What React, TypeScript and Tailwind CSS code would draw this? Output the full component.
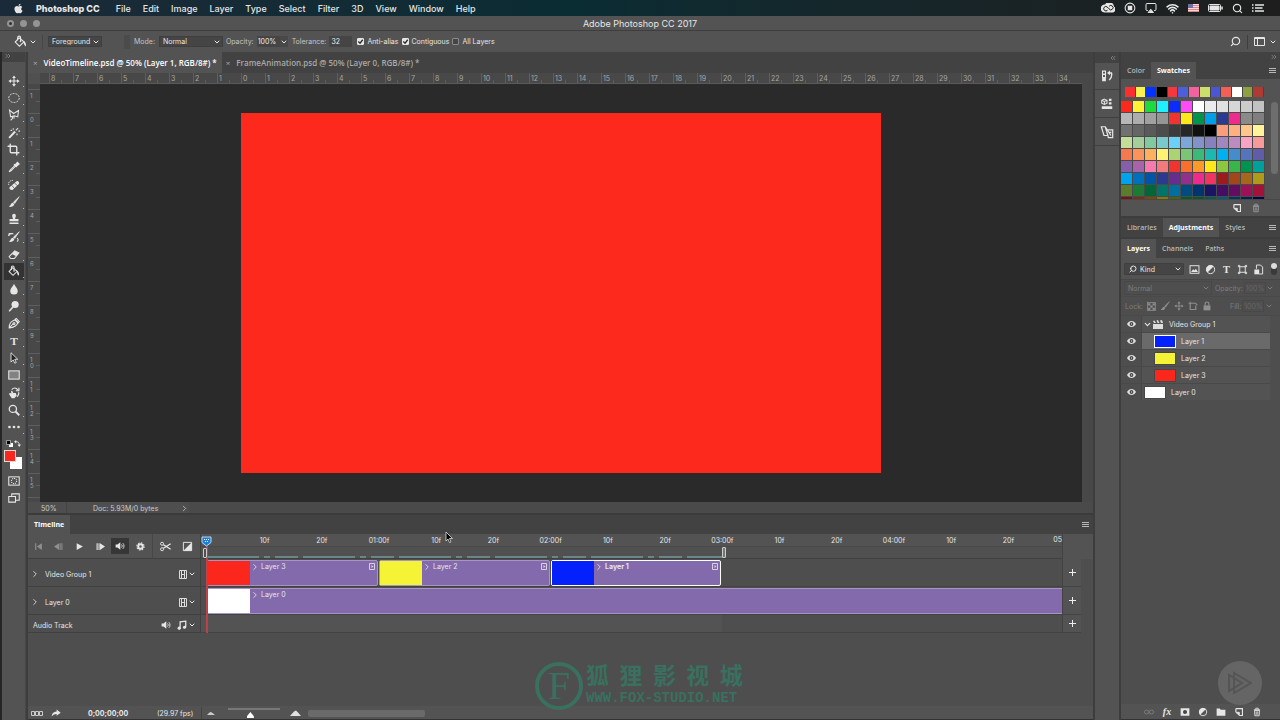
import type { ReactNode } from "react";
import { FaApple } from "react-icons/fa";
import {
  AirplayIcon,
  ChevronDown,
  ChevronRight,
  ChevronsLeft,
  ChevronsRight,
  Crop,
  Search,
  Wifi,
} from "lucide-react";

const menus = ["File", "Edit", "Image", "Layer", "Type", "Select", "Filter", "3D", "View", "Window", "Help"];

const topTicks = [8, 7, 6, 5, 4, 3, 2, 1, ...Array.from({ length: 35 }, (_, i) => i)];
const sideTicks = [1, ...Array.from({ length: 16 }, (_, i) => i)];

const timeMarks = [
  "10f", "20f", "01:00f", "10f", "20f", "02:00f", "10f", "20f",
  "03:00f", "10f", "20f", "04:00f", "10f", "20f",
];

const recentSwatches = [
  "#f9302f", "#f8f24e", "#0433ff", "#000000", "#f5383a", "#4a5fd8", "#f063a0",
  "#cddf6b", "#4c55d6", "#f25f54", "#ffffff", "#8f9f3f", "#b03a33",
];

const swatchRows = [
  "fd2a1c fdf334 1edb3b 1ef0ff 0a2cff fb4df5 ffffff ebebeb e1e1e1 d6d6d6 cccccc c2c2c2",
  "b7b7b7 adadad a0a0a0 959595 f0342f ffe81a 00954a 00a0e9 2b3990 ee2a8c 8a8a8a 7f7f7f",
  "717171 666666 5a5a5a 4d4d4d 3c3c3c 272727 111111 000000 f99d7c fcb182 fdc78c fff49a",
  "c4dd9a a3cf9b 82c9a0 7cc9cb 6dcff6 7da7d9 8393ca 8781bd a187be bc8cbf f9a3c4 f69a9a",
  "f4794e f9955a fbb160 fff173 acd373 7bc576 3cb878 1cb8b1 00b0f0 448ccb 5674b9 605ca8",
  "8560a8 a864a8 f77aae f27a7d f0342f f7702c fb9a2b ffe81a 8dc63f 39b54a 00924f 00a09d",
  "00a3ee 0070bc 0055a6 2b3990 662d91 92318d ee2a8c f03561 9e1b1b a0481a a5671c ae9a1b",
  "5b7c2f 1b7a36 006838 00746b 006fa0 004b80 003471 1b1464 440e62 630d5f 9e1058 a4123a",
  "7a1113 7b2e10 7d4900 827b00 406618 005e20 005826 005952 005b7f 003663 002157 0d004c",
];

const layers = [
  { name: "Layer 1", color: "bg-[#0420fb]", nested: true, selected: true },
  { name: "Layer 2", color: "bg-[#f4f336]", nested: true, selected: false },
  { name: "Layer 3", color: "bg-[#fb261c]", nested: true, selected: false },
  { name: "Layer 0", color: "bg-white", nested: false, selected: false },
];

function Icon({ size = 12, children }: { size?: number; children: ReactNode }) {
  return (
    <svg
      width={size}
      height={size}
      viewBox="0 0 16 16"
      fill="none"
      stroke="currentColor"
      strokeWidth="1.4"
      className="shrink-0"
      aria-hidden="true"
    >
      {children}
    </svg>
  );
}

const solid = { fill: "currentColor", stroke: "none" };

const bucket = (
  <>
    <path d="M6.2 3.5 1.5 8.7l5.2 5 5.6-5.3z" />
    <path d="M4.5 6.5V3.4c0-2.6 3.6-2.6 3.6 0v4.3" />
    <path d="M12 7.5c2 1 3.2 3.4 2.6 6.6-1.8-.6-2.6-2.6-2.6-6.6z" {...solid} />
    <circle cx="8" cy="8" r="1" {...solid} />
  </>
);

const brush = (
  <>
    <path d="M15 1 7.2 8.2l1.7 1.7z" fill="currentColor" strokeWidth="1" />
    <path d="M6.5 9c-3 .2-2.4 3.6-5.5 5 3.4 1.3 7.2.2 7.3-3.2z" {...solid} />
  </>
);

const speaker = (
  <>
    <path d="M1 5.5h3L8.5 2v12L4 10.5H1z" {...solid} />
    <path d="M10.5 5.5c1.3 1.5 1.3 3.5 0 5M12.6 3.5c2.4 2.7 2.4 6.3 0 9" />
  </>
);

const halfCircle = (
  <>
    <circle cx="8" cy="8" r="6" />
    <path d="M12.3 3.7A6 6 0 0 0 3.7 12.3z" {...solid} />
  </>
);

const page = (
  <>
    <path d="M3 2.5h10.5v11h-5M3 2.5v6" strokeWidth="1.8" />
    <path d="M3 8.5h5.5v5z" fill="currentColor" />
  </>
);

const trash = (
  <>
    <path d="M3 4.5h10M6 4.5V2h4v2.5" />
    <path d="M4 5.5h8l-.5 8.5h-7z" />
    <path d="M6.7 7v5.5M9.3 7v5.5" />
  </>
);

const fourWay = (
  <>
    <path d="M8 3v10M3 8h10" />
    <path d="M8 .5 10.5 4h-5zM8 15.5 10.5 12h-5zM.5 8 4 5.5v5zM15.5 8 12 5.5v5z" {...solid} />
  </>
);

const letterT = (
  <text x="8" y="13" textAnchor="middle" fontSize="15" fontFamily="Liberation Serif, serif" fontWeight="700" {...solid}>
    T
  </text>
);

const tools: { name: string; art: ReactNode }[] = [
  { name: "Move", art: fourWay },
  { name: "Elliptical marquee", art: <ellipse cx="8" cy="8" rx="7" ry="6" strokeDasharray="2.6 1.4" strokeWidth="1.2" /> },
  {
    name: "Polygonal lasso",
    art: <path d="M2 1.5 7.5 6 14 2l-1 8.5L8.5 9l-5 1.5zM5 10c2 1 1 3-1.5 5M8 9.5V13" />,
  },
  {
    name: "Magic wand",
    art: (
      <>
        <path d="M1.5 14.5 9.500 6" strokeWidth="2.6" />
        <path d="M7 1.5v2M12 8.5V11M14 5.5h2M10.5 4.5l3-3M3.5 4.5h2" />
      </>
    ),
  },
  { name: "Crop", art: null },
  {
    name: "Eyedropper",
    art: (
      <>
        <path d="m10 5-7 7-1.5 2.500L4 13l7-7" />
        <path d="M8 4.5 11.5 8m-2-2.5 3-3.5 2 2L11 7z" fill="currentColor" strokeWidth="2" />
      </>
    ),
  },
  {
    name: "Healing brush",
    art: (
      <>
        <path d="m2 11 9.500-8c2-1 4 1.500 3 3.500L6 14.500c-2.500 1-5-1.500-4-3.500z" {...solid} />
        <path d="M5 8.500 9 13m0-7.500 4 4" stroke="#535353" strokeWidth="1" />
        <path d="M1 8C0 4 3 1.500 7 2" strokeDasharray="1.5 1.2" strokeWidth="1.2" />
      </>
    ),
  },
  { name: "Brush", art: brush },
  {
    name: "Clone stamp",
    art: <path d="M5.500 3.500a2.500 2.500 0 0 1 5 0c0 1.700-1 2-1 4.500H14v3H2V8h4.500c0-2.500-1-2.800-1-4.500zM2 12.500h12v2H2z" {...solid} />,
  },
  {
    name: "History brush",
    art: (
      <>
        {brush}
        <path d="M1 3.500h6M1 6.500c0-1.500 1-3 3-3" strokeWidth="1.8" />
        <path d="M12 9.500c2 1 2 3 0 4.500" />
      </>
    ),
  },
  {
    name: "Eraser",
    art: (
      <>
        <path d="M1.500 11.500 9 4l5.500 2.500-6 7.500h-5z" />
        <path d="M5 8 9 4l5.500 2.500L11 11z" {...solid} />
      </>
    ),
  },
  { name: "Paint bucket", art: bucket },
  { name: "Blur", art: <path d="M8 1c1 3 5 6 5 9.500a5 4.800 0 0 1-10 0C3 7 7 4 8 1z" {...solid} /> },
  {
    name: "Dodge",
    art: (
      <>
        <circle cx="9.5" cy="6" r="4.8" {...solid} />
        <path d="m6.500 9.500-5 5.500" strokeWidth="2" />
      </>
    ),
  },
  {
    name: "Pen",
    art: (
      <>
        <path d="M1.500 14.500c0-5 2-9 7.500-10.500L13 8c-1.500 4.500-6 6-11.500 6.500zM9.500 3l4.500 4.500 1-1.500-4-4zM1.500 14.500 7 9" />
        <circle cx="8" cy="8.5" r="1.3" />
      </>
    ),
  },
  { name: "Type", art: letterT },
  { name: "Path selection", art: <path d="M4 1v12.500l3-3 2 4.500 2-1-2-4.300h4z" fill="#222" strokeWidth="1.2" /> },
  { name: "Rectangle", art: <rect x="1" y="2.5" width="14" height="11" fill="#828282" /> },
  {
    name: "Rotate view",
    art: (
      <>
        <path d="M1.500 9.500c0-2 2-2 3-1L4 5l2 .5 1 2.500h3.500l1 3.500-3 3.500H5z" {...solid} />
        <path d="M5 3.500c2.500-3 6-3 8 .5M14.500 1v4h-4M14 7c1 2.500 0 4-2 6" strokeWidth="1.6" />
      </>
    ),
  },
  {
    name: "Zoom",
    art: (
      <>
        <circle cx="6.5" cy="6.5" r="4.8" strokeWidth="1.7" />
        <path d="m10 10 5 5" strokeWidth="2.4" />
      </>
    ),
  },
  {
    name: "Edit toolbar",
    art: (
      <>
        <circle cx="2" cy="8" r="1.8" {...solid} />
        <circle cx="8" cy="8" r="1.8" {...solid} />
        <circle cx="14" cy="8" r="1.8" {...solid} />
      </>
    ),
  },
];

function Select({ label, value, className }: { label: string; value: string; className: string }) {
  return (
    <span className={`grid items-center ${className}`}>
      <select aria-label={label} className="col-start-1 row-start-1 w-full appearance-none bg-transparent px-[3px] outline-none">
        <option>{value}</option>
      </select>
      <ChevronDown size={8} strokeWidth={3} className="pointer-events-none col-start-1 row-start-1 mr-px justify-self-end" />
    </span>
  );
}

function Check({ label, checked }: { label: string; checked?: boolean }) {
  return (
    <label className="flex items-center gap-[3px]">
      <span className="grid">
        <input
          type="checkbox"
          defaultChecked={checked}
          className="col-start-1 row-start-1 size-[7px] appearance-none rounded-[1px] border border-[#8a8a8a] bg-[#454545] checked:border-[#e6e6e6] checked:bg-[#e6e6e6]"
        />
        {checked && (
          <svg viewBox="0 0 8 8" className="pointer-events-none col-start-1 row-start-1 size-[7px]" fill="none" stroke="#2b2b2b" strokeWidth="1.5">
            <path d="m1.500 4 2 2 3-4" />
          </svg>
        )}
      </span>
      {label}
    </label>
  );
}

function PanelTabs({ tabs, active, className }: { tabs: string[]; active: string; className: string }) {
  return (
    <div className={`flex bg-[#424242] font-['Open_Sans',sans-serif] ${className}`}>
      {tabs.map((tab) => (
        <button
          key={tab}
          className={tab === active ? "bg-[#535353] px-[6px] font-bold text-white" : "px-[6px] font-semibold text-[#b8b8b8]"}
        >
          {tab}
        </button>
      ))}
      <button aria-label="Panel menu" className="mr-1 ml-auto">
        <svg width="7" height="6" viewBox="0 0 7 6" stroke="#b8b8b8" aria-hidden="true">
          <path d="M0 .5h7M0 2.500h7M0 4.500h7" />
        </svg>
      </button>
    </div>
  );
}

function MenuBar() {
  return (
    <header className="flex h-4 items-center bg-linear-to-r from-[#1b2a38] via-[#0a2c33] via-45% to-[#1e1e1e] pr-4 pl-[13px] text-[9px] font-medium">
      <FaApple size={11} />
      <nav className="ml-3 flex gap-3">
        <button className="mr-1 font-extrabold">Photoshop CC</button>
        {menus.map((menu) => (
          <button key={menu}>{menu}</button>
        ))}
      </nav>
      <div className="ml-auto flex items-center gap-[9px]">
        <svg width="14" height="10" viewBox="0 0 14 10" aria-hidden="true">
          <path d="M4.500 9.500A4 4 0 1 1 4 1.600 4.800 4.800 0 0 1 13 3.500a3.300 3.300 0 0 1-2.500 6z" fill="#e6e6e6" />
          <path d="M6.500 7.200A2.200 2.200 0 1 1 6.300 4L8 5.800a2.200 2.200 0 1 0 .2-2.600" fill="none" stroke="#1e1e1e" />
        </svg>
        <Icon>
          <circle cx="8" cy="8" r="6.5" />
          <rect x="5" y="5" width="6" height="6" {...solid} />
        </Icon>
        <AirplayIcon size={12} fill="currentColor" className="[&>path:first-child]:fill-none" />
        <Wifi size={13} strokeWidth={3} />
        <svg width="11" height="8" viewBox="0 0 11 8" aria-hidden="true">
          <path d="M0 0h11v8H0z" fill="#f0dcdc" />
          <path d="M0 1.500h11M0 3.500h11M0 5.500h11M0 7.500h11" stroke="#e08484" />
          <path d="M0 0h5v4H0z" fill="#6d6fa5" />
        </svg>
        <svg width="15" height="8" viewBox="0 0 15 8" fill="none" stroke="currentColor" aria-hidden="true">
          <rect x=".5" y=".5" width="12" height="7" rx="1" />
          <path d="M2 2h9v4H2z" fill="currentColor" />
          <path d="M14 2.500v3" strokeWidth="1.5" />
        </svg>
        <Search size={11} strokeWidth={2.5} />
        <svg width="12" height="8" viewBox="0 0 12 8" stroke="currentColor" strokeWidth="1.4" aria-hidden="true">
          <path d="M0 1h1.500M3 1h9M0 4h1.500M3 4h7.500M0 7h1.500M3 7h9" />
        </svg>
      </div>
    </header>
  );
}

function TitleBar() {
  return (
    <div className="grid h-[15px] grid-cols-[60px_1fr_60px] items-center border-b border-[#3e3e3e] bg-[#535353] text-[9px]">
      <div className="flex gap-[6px] pl-[7px]">
        <button aria-label="Close" className="grid size-[7px] place-items-center rounded-full bg-[#949494]">
          <span className="size-[3px] rounded-full bg-[#333]" />
        </button>
        <button aria-label="Minimize" className="size-[7px] rounded-full bg-[#949494]" />
        <button aria-label="Full screen" className="size-[7px] rounded-full bg-[#949494]" />
      </div>
      <h1 className="text-center">Adobe Photoshop CC 2017</h1>
    </div>
  );
}

function OptionsBar() {
  return (
    <div className="flex h-[21px] items-center bg-[#535353] pr-[3px] pl-[14px]">
      <button aria-label="Tool preset" className="flex items-center gap-[2px]">
        <Icon size={13}>{bucket}</Icon>
        <ChevronDown size={8} strokeWidth={3} />
      </button>
      <span className="ml-[5px] h-[14px] w-px bg-[#474747]" />
      <Select label="Fill source" value="Foreground" className="ml-[5px] h-[11px] w-[54px] border border-[#3f3f3f] bg-[#454545]" />
      <span className="ml-[22px] h-[14px] w-[6px] bg-[#4b4b4b]" />
      <span className="mr-1 ml-1 text-[#c4c4c4]">Mode:</span>
      <Select label="Mode" value="Normal" className="h-[11px] w-16 border border-[#3f3f3f] bg-[#454545]" />
      <label className="ml-[3px] flex items-center gap-[3px] text-[#c4c4c4]">
        Opacity:
        <input defaultValue="100%" className="h-[11px] w-[23px] bg-[#454545] px-px text-[#eee]" />
      </label>
      <button aria-label="Opacity slider" className="grid h-[11px] w-2 place-items-center bg-[#484848]">
        <ChevronDown size={8} strokeWidth={3} />
      </button>
      <label className="ml-1 flex items-center gap-[3px] text-[#c4c4c4]">
        Tolerance:
        <input defaultValue="32" className="h-[11px] w-[23px] bg-[#454545] px-[2px] text-[#eee]" />
      </label>
      <div className="ml-[5px] flex gap-[3px]">
        <Check label="Anti-alias" checked />
        <Check label="Contiguous" checked />
        <Check label="All Layers" />
      </div>
      <button aria-label="Search" className="ml-auto">
        <Search size={11} strokeWidth={2.5} className="-scale-x-100" />
      </button>
      <span className="mx-[6px] h-[14px] w-px bg-[#3f3f3f]" />
      <button aria-label="Workspace" className="flex items-center gap-1">
        <svg width="11" height="9" viewBox="0 0 11 9" fill="none" stroke="currentColor" aria-hidden="true">
          <path d="M.5.500h10v8H.5zM0 1.500h11M3.500 1v7" />
        </svg>
        <ChevronDown size={8} strokeWidth={3} />
      </button>
    </div>
  );
}

function Toolbar() {
  return (
    <aside className="w-6 shrink-0 border-r border-[#484848] bg-[#535353]">
      <div className="h-[10px] bg-[#424242] pl-[2px] text-[#999]">
        <ChevronsRight size={8} />
      </div>
      <div className="mt-[10px] grid h-[364px] auto-rows-fr justify-items-center">
        {tools.map((tool) => (
          <button
            key={tool.name}
            aria-label={tool.name}
            className={
              tool.name === "Paint bucket"
                ? "relative grid w-5 place-items-center bg-[#333]"
                : "relative grid w-5 place-items-center"
            }
          >
            {tool.name === "Crop" ? <Crop size={13} strokeWidth={2.5} /> : <Icon>{tool.art}</Icon>}
            <span className="absolute right-0 bottom-[2px] size-px bg-[#bbb]" />
          </button>
        ))}
      </div>
      <div className="flex justify-between px-1 pt-1">
        <svg width="7" height="7" viewBox="0 0 7 7" aria-hidden="true">
          <path d="M3 3h4v4H3z" fill="#fff" />
          <path d="M.5.500h4v4h-4z" fill="#000" stroke="#ccc" strokeWidth=".7" />
        </svg>
        <Icon size={7}>
          <path d="M4 4c5-1 8 2 8 7" strokeWidth="2" />
          <path d="M5 0v8L0 4zM8 10h8l-4 6z" {...solid} />
        </Icon>
      </div>
      <div className="relative mx-[2px] mt-[3px] h-[19px]">
        <span className="absolute right-px bottom-0 size-3 bg-white" />
        <span className="absolute top-0 left-0 size-3 border border-[#ddd] bg-[#fb261c]" />
      </div>
      <div className="mt-[6px] grid justify-items-center gap-[5px]">
        <button aria-label="Quick mask">
          <Icon>
            <rect x="1" y="2.5" width="14" height="11" />
            <circle cx="8" cy="8" r="3.5" strokeDasharray="1.5 1.2" />
          </Icon>
        </button>
        <button aria-label="Screen mode">
          <Icon>
            <path d="M5 6V2.500h10v8.500h-5M1 6h9v7.500H1z" />
          </Icon>
        </button>
      </div>
    </aside>
  );
}

function DocumentArea() {
  return (
    <section className="flex flex-1 flex-col">
      <div className="flex h-[21px] bg-[#424242] font-['Open_Sans',sans-serif] text-[8px] font-semibold">
        <div className="flex items-center gap-[6px] bg-[#535353] px-[5px] text-white">
          <button aria-label="Close VideoTimeline.psd" className="font-normal text-[#aaa]">×</button>
          VideoTimeline.psd @ 50% (Layer 1, RGB/8#) *
        </div>
        <div className="flex items-center gap-[6px] pl-1 text-[#a9a9a9]">
          <button aria-label="Close FrameAnimation.psd" className="font-normal">×</button>
          FrameAnimation.psd @ 50% (Layer 0, RGB/8#) *
        </div>
      </div>
      <div className="flex flex-1">
        <div className="flex w-3 shrink-0 flex-col bg-[#484848]">
          <div className="h-[11px] shrink-0 bg-[#505050]" />
          <div className="flex-1 overflow-hidden pt-[5px] text-[6px] leading-[6px] text-[#a5a5a5] contain-size">
            {sideTicks.map((tick, i) => (
              <div key={i} className="flex h-6 justify-between border-t border-[#5e5e5e]">
                <span className="w-[6px] pt-[3px] pl-[2px] break-all">{tick}</span>
                <span className="mt-[11px] h-px w-1 bg-[#5e5e5e]" />
              </div>
            ))}
            <div className="border-t border-[#5e5e5e]" />
          </div>
        </div>
        <div className="flex min-w-0 flex-1 flex-col">
          <div className="flex h-[11px] overflow-hidden border-b border-[#5a5a5a] bg-[#484848] pl-[9px] text-[7px] leading-[8px] text-[#a5a5a5]">
            {topTicks.map((tick, i) => (
              <div key={i} className="flex w-6 shrink-0 items-end border-l border-[#5e5e5e]">
                <span className="w-[11px] pl-px">{tick}</span>
                <span className="h-[3px] w-px bg-[#5e5e5e]" />
              </div>
            ))}
          </div>
          <div className="flex flex-1 items-center justify-center bg-[#2a2a2a]">
            <div className="aspect-video w-[640px] bg-[#fd291c]" />
          </div>
        </div>
        <div className="w-[11px] shrink-0 bg-[#484848]" />
      </div>
      <div className="flex h-[11px] items-center bg-[#4a4a4a] text-[7px] text-[#ccc]">
        <span className="flex h-full w-[39px] items-center border-r border-[#444] bg-[#4e4e4e] pt-px pl-[13px]">50%</span>
        <span className="flex h-full w-[122px] items-center justify-between bg-[#4e4e4e] pt-px pl-[26px]">
          Doc: 5.93M/0 bytes
          <ChevronRight size={9} />
        </span>
      </div>
    </section>
  );
}

function Clip({ name, color, selected }: { name: string; color: string; selected?: boolean }) {
  return (
    <div
      className={
        selected
          ? "flex h-[26px] w-[170px] rounded-[2px] border border-white bg-[#836aac] font-bold"
          : "mr-px flex h-[26px] w-[171px] rounded-[2px] border border-[#a794c2] bg-[#836aac]"
      }
    >
      <span className={`w-[42px] ${color}`} />
      <ChevronRight size={10} className="mt-px mr-px" />
      <span className="leading-3">{name}</span>
      <svg width="7" height="8" viewBox="0 0 7 8" fill="none" stroke="#d8d0e4" className="mt-[2px] mr-px ml-auto" aria-hidden="true">
        <path d="M.5.500h5v6h-5z" />
        <path d="M2.500 2v3l2-1.500z" fill="#d8d0e4" stroke="none" />
      </svg>
    </div>
  );
}

function Film() {
  return (
    <svg width="8" height="9" viewBox="0 0 8 9" fill="none" stroke="#ddd" aria-hidden="true">
      <path d="M.5.500h7v8h-7zM2.500 0v9M5.500 0v9M2.500 4.500h3" />
    </svg>
  );
}

function TrackHeader({ name, audio }: { name: string; audio?: boolean }) {
  return (
    <div className="flex w-[173px] shrink-0 items-center border-r border-b border-[#404040] bg-[#4e4e4e] pt-[3px] pr-1 pl-[2px]">
      {!audio && <ChevronRight size={10} className="mr-[5px]" />}
      <span className={audio ? "pl-[3px]" : ""}>{name}</span>
      <span className="ml-auto flex items-center gap-px">
        {audio && (
          <button aria-label="Mute audio" className="mr-[5px]">
            <Icon size={10}>{speaker}</Icon>
          </button>
        )}
        {audio ? (
          <Icon size={10}>
            <path d="M5 13V3l9-1v9" strokeWidth="2" />
            <circle cx="3.5" cy="13" r="2.5" {...solid} />
            <circle cx="12" cy="11.5" r="2.5" {...solid} />
          </Icon>
        ) : (
          <Film />
        )}
        <ChevronDown size={8} strokeWidth={3} />
      </span>
    </div>
  );
}

function AddCell({ label }: { label: string }) {
  return (
    <button
      aria-label={label}
      className="mr-3 grid w-[19px] shrink-0 place-items-center border-b border-l border-[#434343] bg-[#535353]"
    >
      <svg width="7" height="7" viewBox="0 0 7 7" stroke="#eee" strokeWidth="1" aria-hidden="true">
        <path d="M0 3.500h7M3.500 0v7" />
      </svg>
    </button>
  );
}

function Timeline() {
  return (
    <section className="border-t-2 border-[#3b3b3b] bg-[#4e4e4e]">
      <PanelTabs tabs={["Timeline"]} active="Timeline" className="h-[19px]" />
      <div className="relative">
        <div className="flex h-[25px] bg-[#535353]">
          <div className="flex w-[173px] shrink-0 items-center border-r border-b border-[#404040]">
            <button aria-label="First frame" className="grid w-5 place-items-center text-[#8f8f8f]">
              <Icon size={9}>
                <path d="M2 2h2v12H2zM14 2v12L5 8z" {...solid} />
              </Icon>
            </button>
            <button aria-label="Previous frame" className="grid w-[21px] place-items-center text-[#8f8f8f]">
              <Icon size={9}>
                <path d="M9 2v12L0 8zM10 2h1.800v12H10zM13.200 2H15v12h-1.800z" {...solid} />
              </Icon>
            </button>
            <button aria-label="Play" className="grid w-[21px] place-items-center">
              <Icon size={9}>
                <path d="M3 2v12l11-6z" {...solid} />
              </Icon>
            </button>
            <button aria-label="Next frame" className="grid w-[21px] place-items-center">
              <Icon size={9}>
                <path d="M1 2h2v12H1zM4.500 2h1.800v12H4.500zM7 2v12l9-6z" {...solid} />
              </Icon>
            </button>
            <button aria-label="Audio playback" className="grid h-4 w-[18px] place-items-center bg-[#363636]">
              <Icon size={10}>{speaker}</Icon>
            </button>
            <button aria-label="Playback options" className="grid w-[23px] place-items-center">
              <Icon size={9}>
                <circle cx="8" cy="8" r="4" strokeWidth="3.5" />
                <circle cx="8" cy="8" r="6.5" strokeWidth="2" strokeDasharray="2.6 2.5" />
              </Icon>
            </button>
            <span className="h-[25px] w-px bg-[#474747]" />
            <button aria-label="Split at playhead" className="grid w-[25px] place-items-center">
              <Icon size={11}>
                <path d="M5 5.500 15.500 12M5 10.500 15.500 4" strokeWidth="2" />
                <circle cx="3" cy="4" r="2.2" />
                <circle cx="3" cy="12" r="2.2" />
              </Icon>
            </button>
            <button aria-label="Transition" className="grid w-[18px] place-items-center">
              <Icon size={11}>
                <path d="M2 2h12v12H2z" />
                <path d="M14 2v12H2z" {...solid} />
              </Icon>
            </button>
          </div>
          <div className="min-w-0 flex-1 overflow-hidden border-b border-[#404040]">
            <div className="flex">
              <div className="ml-[35px] grid h-3 w-[801px] shrink-0 grid-cols-14 items-center justify-items-center">
                {timeMarks.map((mark, i) => (
                  <span key={i}>{mark}</span>
                ))}
              </div>
              <span className="ml-auto leading-3">05</span>
            </div>
            <div className="flex h-3 flex-col justify-end border-t border-[#494949] bg-[#505050]">
              <div className="ml-[6px] h-[2px] w-[516px] bg-[repeating-linear-gradient(90deg,#69868a_0_52px,#535353_52px_57px,#69868a_57px_63px,#535353_63px_68px,#69868a_68px_91px,#535353_91px_96px)]" />
            </div>
          </div>
          <div className="mr-3 w-[19px] shrink-0 border-l border-[#434343]" />
        </div>
        <div className="flex h-7">
          <TrackHeader name="Video Group 1" />
          <div className="flex min-w-0 flex-1 items-center border-b border-[#434343] pl-[6px]">
            <Clip name="Layer 3" color="bg-[#fb261c]" />
            <Clip name="Layer 2" color="bg-[#f4f336]" />
            <Clip name="Layer 1" color="bg-[#0420fb]" selected />
          </div>
          <AddCell label="Add media to Video Group 1" />
        </div>
        <div className="flex h-7">
          <TrackHeader name="Layer 0" />
          <div className="flex min-w-0 flex-1 items-center border-b border-[#434343] pl-[6px]">
            <div className="flex h-[26px] flex-1 border-y border-l border-[#a794c2] bg-[#836aac]">
              <span className="w-[42px] bg-white" />
              <ChevronRight size={10} className="mt-px mr-px" />
              <span className="leading-3">Layer 0</span>
            </div>
          </div>
          <AddCell label="Add media to Layer 0" />
        </div>
        <div className="flex h-[18px]">
          <TrackHeader name="Audio Track" audio />
          <div className="min-w-0 flex-1 border-b border-[#434343]">
            <div className="h-full w-[521px] bg-[#535353]" />
          </div>
          <AddCell label="Add audio" />
        </div>
        {/* playhead and work area handles sit over every track */}
        <div className="absolute top-[2px] bottom-0 left-[173px] w-[11px]">
          <span className="absolute top-[10px] bottom-0 left-[5px] w-[2px] bg-[#b8434a]" />
          <svg width="11" height="11" viewBox="0 0 11 11" className="absolute top-0 left-0" aria-hidden="true">
            <path d="M1 1h9v5.500L5.500 10 1 6.500z" fill="#1d7ed6" stroke="#b5d8f5" />
            <path d="M3 3.500h1M5 3.500h1M7 3.500h1M4 5.500h1M6 5.500h1" stroke="#fff" />
          </svg>
          <span className="absolute top-3 left-[2px] h-[10px] w-1 rounded-[1px] border border-[#ccc]" />
        </div>
        <span className="absolute top-[13px] left-[694px] h-[11px] w-[4px] rounded-[1px] border border-[#ccc] bg-[#777]" />
      </div>
      <div className="h-[73px]" />
      <div className="flex h-[14px] items-center border-b border-[#333] bg-[#535353] pt-px pl-[3px]">
        <button aria-label="Convert to frame animation">
          <svg width="12" height="5" viewBox="0 0 12 5" fill="none" stroke="#ccc" aria-hidden="true">
            <path d="M.5.500h3v4h-3zM4.500.500h3v4h-3zM8.500.500h3v4h-3z" />
          </svg>
        </button>
        <button aria-label="Render video" className="ml-2">
          <Icon size={10}>
            <path d="M9 2.500 15.500 7.500 9 12.500v-3C5 9.500 3 11 1 14c0-5 3-8 8-8.500z" {...solid} />
          </Icon>
        </button>
        <span className="ml-[27px] w-[69px] font-bold">0;00;00;00</span>
        <span className="w-[44px]">(29.97 fps)</span>
        <span className="h-full w-px bg-[#444]" />
        <svg width="8" height="4" viewBox="0 0 8 4" className="ml-[5px]" fill="#ccc" aria-hidden="true">
          <path d="M0 4 2.500 1.500 4 1l1.500 1L8 4z" />
        </svg>
        <input
          type="range"
          aria-label="Timeline zoom"
          defaultValue={42}
          className="ml-[13px] h-[10px] w-[52px] appearance-none bg-[linear-gradient(#777,#777)] bg-[length:100%_2px] bg-top bg-no-repeat [&::-webkit-slider-thumb]:mt-1 [&::-webkit-slider-thumb]:h-[6px] [&::-webkit-slider-thumb]:w-[7px] [&::-webkit-slider-thumb]:appearance-none [&::-webkit-slider-thumb]:bg-white [&::-webkit-slider-thumb]:[clip-path:polygon(50%_0,100%_70%,100%_100%,0_100%,0_70%)]"
        />
        <svg width="11" height="6" viewBox="0 0 11 6" className="ml-[10px]" fill="#e0e0e0" aria-hidden="true">
          <path d="M0 6 4 1.500 6 .5l2 2L11 6z" />
        </svg>
        <div className="ml-[7px] h-[7px] w-[117px] rounded-[2px] bg-[#6a6a6a]" />
      </div>
    </section>
  );
}

function IconDock() {
  return (
    <aside className="mx-[2px] w-6 shrink-0 bg-[#535353]">
      <div className="flex h-[11px] items-center justify-end bg-[#424242] pr-[2px] text-[#999]">
        <ChevronsLeft size={8} />
      </div>
      <button aria-label="History" className="grid h-[27px] w-full place-items-center border-b border-[#404040]">
        <Icon>
          <path d="M2 1.500h4v4H2zM2 6h4v4H2z" />
          <path d="M1.500 10.500h5V15h-5z" {...solid} />
          <path d="M10 4h4c1 4-.5 7-3 9.500" strokeWidth="1.8" />
          <path d="M12 .5v6.500L8 4z" {...solid} />
        </Icon>
      </button>
      <button aria-label="Properties" className="grid h-7 w-full place-items-center border-b border-[#404040]">
        <Icon>
          <path d="M4.500 1.500 8 3v4L4.500 8.500 1 7V3zM1 3l3.500 1.500L8 3M4.500 4.500v4" />
          <path d="M10.500 1H14v3h-3.500zM10.500 5.500H14v3h-3.500zM1 11h14v3.500H1z" {...solid} />
        </Icon>
      </button>
      <button aria-label="Notes" className="grid h-7 w-full place-items-center border-b border-[#404040]">
        <Icon size={14}>
          <path d="M1.500 2H6l3 10H4.500zM8 5.500h6.500v9h-5L9 12M6 2l6.500 10M10.500 8.500H13" />
        </Icon>
      </button>
    </aside>
  );
}

function Swatches() {
  return (
    <div className="bg-[#535353]">
      <div className="mx-1 flex pt-2 pr-[12px]">
        {recentSwatches.map((color, i) => (
          <span key={i} className="h-[10px] flex-1 border-r border-[#444]" style={{ backgroundColor: color }} />
        ))}
      </div>
      <div className="mt-1 flex h-[98px] overflow-hidden">
        <div className="grid w-36 auto-rows-[12px] grid-cols-12">
          {swatchRows.flatMap((row, r) =>
            row.split(" ").map((color, c) => (
              <span key={`${r}-${c}`} className="border-r border-b border-[#4a4a4a]" style={{ backgroundColor: `#${color}` }} />
            )),
          )}
        </div>
        <div className="mt-px ml-[6px] h-[72px] w-[7px] rounded-full bg-[#6e6e6e]" />
      </div>
      <div className="flex h-[17px] items-center gap-[9px] border-t border-[#484848] pl-[111px]">
        <button aria-label="New swatch">
          <Icon size={10}>{page}</Icon>
        </button>
        <button aria-label="Delete swatch" className="text-[#999]">
          <Icon size={10}>{trash}</Icon>
        </button>
      </div>
    </div>
  );
}

function Eye() {
  return (
    <svg width="9" height="6" viewBox="0 0 9 6" aria-hidden="true">
      <path d="M0 3C2-.9 7-.9 9 3 7 6.900 2 6.900 0 3z" fill="#e0e0e0" />
      <circle cx="4.5" cy="3" r="1.9" fill="#444" />
      <circle cx="4.5" cy="3" r=".7" fill="#ccc" />
    </svg>
  );
}

function LayersPanel() {
  return (
    <div className="flex flex-1 flex-col bg-[#4e4e4e]">
      <div className="flex h-[22px] items-center gap-[5px] border-b border-[#474747] bg-[#535353] pt-px pl-[3px]">
        <span className="flex h-3 w-[60px] items-center rounded-[1px] border border-[#3f3f3f] bg-[#454545] pl-1">
          <Search size={8} strokeWidth={3} className="-scale-x-100" />
          <Select label="Filter" value="Kind" className="flex-1" />
        </span>
        <Icon size={11}>
          <rect x="1.5" y="2.5" width="13" height="11" />
          <path d="m3 11.500 3-4 2 2 2-2.500 3 4.500z" {...solid} />
        </Icon>
        <Icon size={11}>{halfCircle}</Icon>
        <Icon size={11}>{letterT}</Icon>
        <Icon size={11}>
          <path d="M4 4h8v8H4zM2 2h2v2H2zM12 2h2v2h-2zM2 12h2v2H2zM12 12h2v2h-2z" />
        </Icon>
        <Icon size={11}>
          <path d="M5 7V1.500h6l3 3v10H9" />
          <path d="M2 8h7v7H2z" {...solid} />
        </Icon>
        <span className="ml-[2px] h-[12px] w-[6px] rounded-full bg-[#3a3a3a]">
          <span className="block size-[6px] rounded-full bg-[#ddd]" />
        </span>
      </div>
      <div className="flex h-[17px] items-center border-b border-[#4a4a4a] pl-[3px] text-[#7d7d7d]">
        <Select label="Blend mode" value="Normal" className="h-[14px] w-[88px] border border-[#484848]" />
        <label className="ml-[3px] flex items-center gap-px">
          Opacity:
          <input defaultValue="100%" disabled className="h-3 w-[22px] border border-[#484848] px-px text-[#656565]" />
        </label>
        <ChevronDown size={8} strokeWidth={3} />
      </div>
      <div className="flex h-[19px] items-center gap-1 border-b border-[#4a4a4a] pl-1 text-[#8f8f8f]">
        <span className="text-[#7d7d7d]">Lock:</span>
        <Icon size={9}>
          <rect x="1" y="1" width="14" height="14" />
          <path d="M2 2h4v4H2zM10 2h4v4h-4zM6 6h4v4H6zM2 10h4v4H2zM10 10h4v4h-4z" {...solid} />
        </Icon>
        <Icon size={10}>{brush}</Icon>
        <Icon size={10}>{fourWay}</Icon>
        <Icon size={10}>
          <path d="M1 3.500h11l3 3M3.500 1v12.500h9V7" strokeWidth="1.8" />
        </Icon>
        <Icon size={10}>
          <path d="M2.500 7h11v8h-11z" {...solid} />
          <path d="M5 7V4.500a3 3 0 0 1 6 0V7" strokeWidth="1.8" />
        </Icon>
        <label className="ml-[14px] flex items-center gap-px text-[#7d7d7d]">
          Fill:
          <input defaultValue="100%" disabled className="h-3 w-[22px] border border-[#484848] px-px text-[#656565]" />
          <ChevronDown size={8} strokeWidth={3} />
        </label>
      </div>
      <ul className="mr-[10px] flex-1">
        <li className="flex h-4 items-stretch">
          <button aria-label="Toggle Video Group 1" className="grid w-[21px] place-items-center border-r border-[#474747]">
            <Eye />
          </button>
          <span className="flex flex-1 items-center bg-[#535353] pl-px">
            <ChevronDown size={9} strokeWidth={3} />
            <svg width="10" height="9" viewBox="0 0 10 9" className="mr-[6px] ml-px" fill="#ddd" aria-hidden="true">
              <path d="M0 4h10v5H0zM0 1l1.500-.5L3 3H1zM3.500.500 5 0l1.500 3h-2zM7 .5 9 0l1 3H8z" />
            </svg>
            Video Group 1
          </span>
        </li>
        {layers.map((layer) => (
          <li key={layer.name} className="flex h-[17px] items-stretch border-t border-[#494949]">
            <button aria-label={`Toggle ${layer.name}`} className="grid w-[21px] place-items-center border-r border-[#474747]">
              <Eye />
            </button>
            <span
              className={`flex flex-1 items-center gap-[5px] ${layer.selected ? "bg-[#6a6a6a]" : "bg-[#535353]"} ${
                layer.nested ? "pl-3" : "pl-[2px]"
              }`}
            >
              <span className={`h-[13px] w-[22px] border ${layer.color} ${layer.selected ? "border-white" : "border-[#474747]"}`} />
              {layer.name}
            </span>
          </li>
        ))}
      </ul>
      <div className="flex h-4 items-center gap-2 border-b border-[#333] bg-[#535353] pl-[23px]">
        <button aria-label="Link layers" className="text-[#808080]">
          <Icon size={10}>
            <rect x="0.7" y="5" width="7" height="6" rx="3" />
            <rect x="8.3" y="5" width="7" height="6" rx="3" />
          </Icon>
        </button>
        <button aria-label="Layer style" className="w-[10px] font-['Liberation_Serif',serif] text-[10px] font-bold italic">
          fx
        </button>
        <button aria-label="Add mask">
          <Icon size={10}>
            <path d="M1 2h14v12H1z" {...solid} />
            <circle cx="8" cy="8" r="3.2" fill="#444" stroke="none" />
          </Icon>
        </button>
        <button aria-label="New adjustment layer">
          <Icon size={10}>{halfCircle}</Icon>
        </button>
        <button aria-label="New group">
          <Icon size={10}>
            <path d="M1 2.500h5l1.500 2H15V14H1z" {...solid} />
          </Icon>
        </button>
        <button aria-label="New layer">
          <Icon size={10}>{page}</Icon>
        </button>
        <button aria-label="Delete layer">
          <Icon size={10}>{trash}</Icon>
        </button>
      </div>
    </div>
  );
}

function Watermark() {
  return (
    <div className="pointer-events-none absolute bottom-[10px] left-[535px] flex items-start gap-[3px] text-[#39705f]">
      <span className="grid size-12 place-items-center rounded-full border-4 border-[#39705f] font-['Liberation_Serif',serif] text-[40px] leading-none">
        F
      </span>
      <span className="flex flex-col gap-1">
        <span className="font-['Noto_Sans_CJK_SC',sans-serif] text-[23px] leading-6 font-bold whitespace-pre">
          狐  狸  影  视  城
        </span>
        <span className="font-['Liberation_Mono',monospace] text-[14px] leading-4 font-bold">WWW.FOX-STUDIO.NET</span>
      </span>
    </div>
  );
}

export default function App() {
  return (
    <div className="relative flex min-h-screen flex-col overflow-hidden bg-[#3d3d3d] font-['Inter','Noto_Sans_CJK_SC',sans-serif] text-[7px] leading-none text-[#e6e6e6]">
      <MenuBar />
      <TitleBar />
      <OptionsBar />
      <div className="flex flex-1 border-l-2 border-[#262626]">
        <Toolbar />
        <main className="ml-[2px] flex min-w-0 flex-1 flex-col">
          <DocumentArea />
          <Timeline />
        </main>
        <IconDock />
        <aside className="flex w-[159px] shrink-0 flex-col">
          <div className="flex h-[10px] items-center justify-end bg-[#424242] pr-[2px] text-[#999]">
            <ChevronsRight size={8} />
          </div>
          <PanelTabs tabs={["Color", "Swatches"]} active="Swatches" className="h-[17px]" />
          <Swatches />
          <PanelTabs tabs={["Libraries", "Adjustments", "Styles"]} active="Adjustments" className="mt-[2px] h-[19px]" />
          <PanelTabs tabs={["Layers", "Channels", "Paths"]} active="Layers" className="mt-[2px] h-[19px]" />
          <LayersPanel />
        </aside>
      </div>
      <Watermark />
      <svg width="9" height="13" viewBox="0 0 9 13" className="pointer-events-none absolute bottom-[176px] left-[445px]" aria-hidden="true">
        <path d="M1 1v9l2-2 1.500 3.500L6 11 4.500 7.500h3z" fill="#000" stroke="#ddd" strokeWidth=".8" />
      </svg>
      <div className="pointer-events-none absolute right-[18px] bottom-[15px] grid size-11 place-items-center rounded-full bg-[#6b6b6b]/80">
        <svg width="24" height="24" viewBox="0 0 24 24" fill="none" stroke="#555" strokeWidth="2" aria-hidden="true">
          <path d="M6 2v20l17-10zM1 4v16l13-8z" />
        </svg>
      </div>
    </div>
  );
}
